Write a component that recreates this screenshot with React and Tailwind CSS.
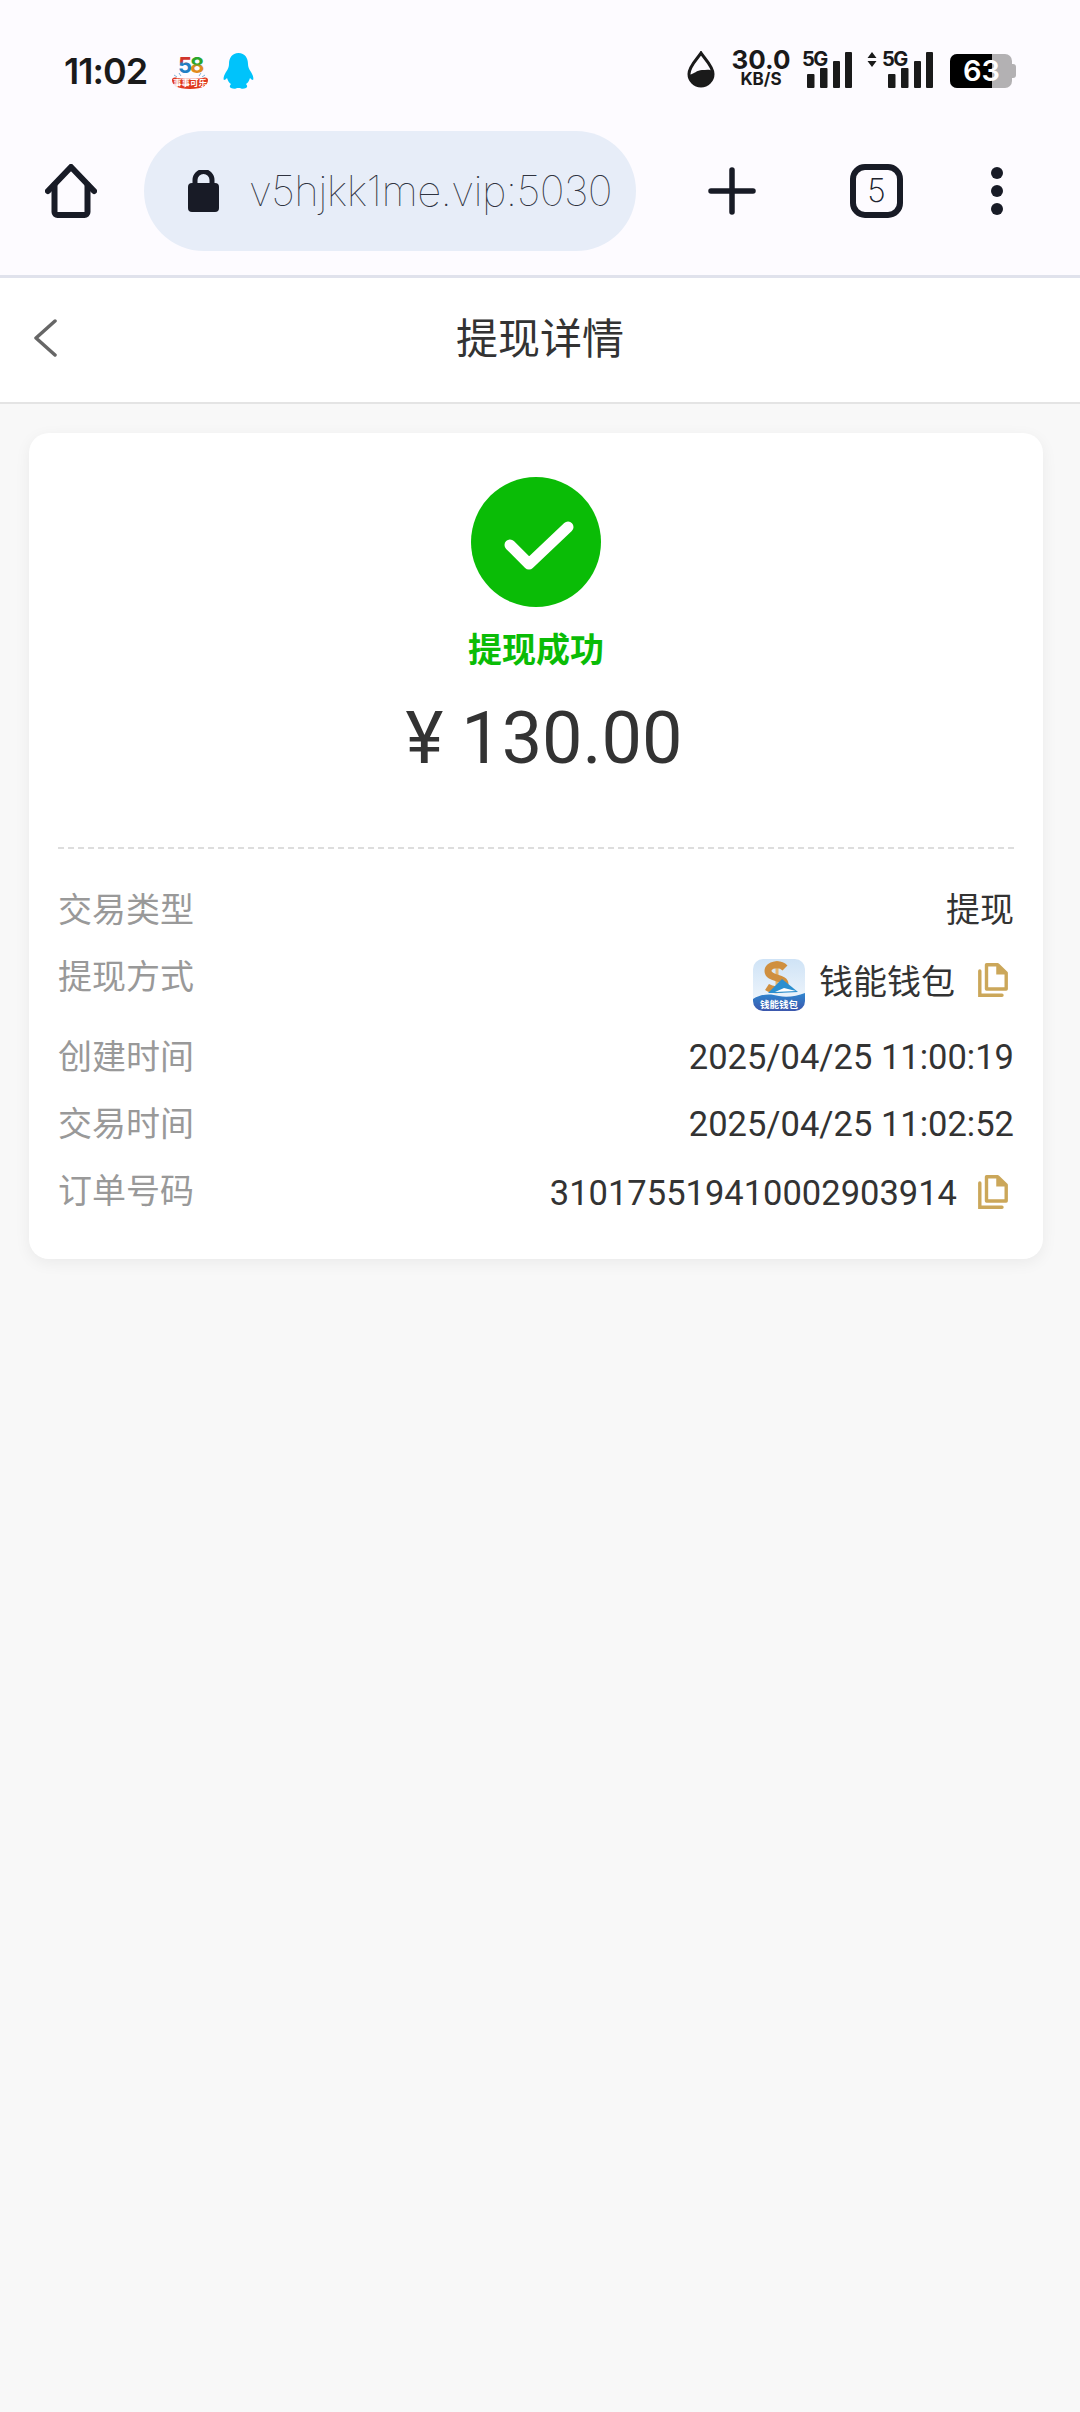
import React from 'react';

const dark = '#181b26';

const SignalBars = () => (
    <svg width="45" height="36" viewBox="0 0 45 36" fill="#1a1a1a">
        <rect x="0" y="22" width="7.500" height="14" rx="1" />
        <rect x="13" y="16" width="7.500" height="20" rx="1" />
        <rect x="26" y="9" width="7" height="27" rx="1" />
        <rect x="38" y="0" width="7" height="36" rx="1" />
    </svg>
);

const CopyIcon = () => (
    <svg width="30" height="34" viewBox="0 0 30 34" fill="none" stroke="#cba75a" strokeWidth="3.400">
        <path d="M8.500 1.800h11.200l8.500 8.200v16H8.500z" strokeLinejoin="round" />
        <path d="M19 1.800v9h9" fill="#cba75a" stroke="#cba75a" strokeWidth="1.500" />
        <path d="M1.800 8v24.200H24" strokeLinecap="round" />
    </svg>
);

const FiftyEightLogo = () => (
    <svg className="ml-[24px] mt-[4px]" width="38" height="40" viewBox="0 -4 38 40">
        <defs>
            <linearGradient id="five" x1="0" y1="0" x2="0" y2="1">
                <stop offset="0.35" stopColor="#d0342c" />
                <stop offset="0.45" stopColor="#1f7fc4" />
            </linearGradient>
            <linearGradient id="eight" x1="0" y1="0" x2="0" y2="1">
                <stop offset="0.45" stopColor="#2aa52a" />
                <stop offset="0.55" stopColor="#e08a1e" />
            </linearGradient>
        </defs>
        <text x="7" y="16" fontSize="22" fontWeight="700" fill="url(#five)" fontFamily="Inter, sans-serif">5</text>
        <text x="19" y="16" fontSize="22" fontWeight="700" fill="url(#eight)" fontFamily="Inter, sans-serif">8</text>
        <path d="M3 18l3 2M34 18l-3 2M8 16l2 3M30 16l-2 3" stroke="#7fb2d8" strokeWidth="1" />
        <path d="M1 23c0-2 2-3 5-2 4 1 22 1 26 0 3-1 5 0 5 2 0 5-5 9-18 9S1 28 1 23z" fill="#e0391f" />
        <text x="19" y="29" textAnchor="middle" fontSize="8.500" fontWeight="700" fill="#ffffff" fontFamily="'Noto Sans CJK SC', sans-serif">事事可乐</text>
    </svg>
);

const WalletLogo = () => (
    <svg width="52" height="52" viewBox="0 0 52 52">
        <defs>
            <linearGradient id="sky" x1="0" y1="0" x2="0" y2="1">
                <stop offset="0" stopColor="#cfe3f6" />
                <stop offset="1" stopColor="#f5f9fd" />
            </linearGradient>
            <linearGradient id="band" x1="0" y1="0" x2="0" y2="1">
                <stop offset="0" stopColor="#2f86cf" />
                <stop offset="1" stopColor="#3c57ad" />
            </linearGradient>
        </defs>
        <rect width="52" height="52" rx="10" fill="url(#sky)" />
        <path d="M24 2v30" stroke="#e6b56c" strokeWidth="3" />
        <path d="M32 9C27 4 15 5 15 12c0 8 17 6 17 13 0 7-12 7-18 3" fill="none" stroke="#cf8f3f" strokeWidth="7" />
        <path d="M15 34l14-14 16 13-20 1z" fill="#2b8fd0" />
        <path d="M22 33l21-1-12-3z" fill="#ffffff" />
        <path d="M0 40c10-6 18-5 26-3s18 0 26-3v8a10 10 0 0 1-10 10H10A10 10 0 0 1 0 42z" fill="url(#band)" />
        <text x="26" y="49" textAnchor="middle" fontSize="9.500" fontWeight="700" fill="#ffffff" fontFamily="'Noto Sans CJK SC', sans-serif">钱能钱包</text>
    </svg>
);

const Row = ({ label, children, className = '' }) => (
    <div className={`flex justify-between ${className}`}>
        <span className="text-[#999999] text-[34px] leading-[46px]">{label}</span>
        {children}
    </div>
);

const App = () => {
    return (
        <div className="w-[1080px] h-[2412px] bg-[#f8f8f8] font-['Roboto','Noto_Sans_CJK_SC',sans-serif] text-[#333333]">

            {/* browser chrome */}
            <div className="bg-[#fdfbff] border-b-[3px] border-[#e0e2ec] pb-[24px]">
                <div className="h-[131px] pt-[49px] pl-[64px] pr-[64px] flex justify-between items-start font-['Inter',sans-serif]">
                    <div className="flex items-start">
                        <span className="text-[36px] leading-[44px] font-semibold text-[#1a1a1a] tracking-[-1px]">11:02</span>
                        <FiftyEightLogo />
                        <svg className="ml-[14px] mt-[4px]" width="31" height="36" viewBox="0 0 31 36" fill="#00c3fb">
                            <path d="M15.500 0C22 0 25 5 25 11c0 3 1 5 3 8 2 3 3 7 2 8-1 0-2-1-3-2-1 3-2 5-4 6 1 1 2 3 0 4-2 1-5 1-6 0h-3c-1 1-4 1-6 0-2-1-1-3 0-4-2-1-3-3-4-6-1 1-2 2-3 2-1-1 0-5 2-8 2-3 3-5 3-8C6 5 9 0 15.500 0z" />
                        </svg>
                    </div>
                    <div className="flex items-start">
                        <svg className="mt-[2px]" width="28" height="37" viewBox="0 0 28 37">
                            <path d="M14 2c3 5 12 13 12 21a12 12 0 0 1-24 0C2 15 11 7 14 2z" fill="none" stroke="#1a1a1a" strokeWidth="3" />
                            <path d="M2 24c5-1 8-5 13-5 4 0 7-1 11 1 1 9-5 15-12 15S1 30 2 24z" fill="#1a1a1a" />
                        </svg>
                        <div className="ml-[18px] w-[56px] flex flex-col items-center text-[#1a1a1a] font-bold">
                            <span className="text-[26px] leading-[22px]">30.0</span>
                            <span className="text-[17px] leading-[15px] mt-[1px]">KB/S</span>
                        </div>
                        <div className="ml-[13px] relative w-[50px] h-[36px] mt-[3px]">
                            <span className="absolute left-0 top-[-3px] text-[20px] leading-[20px] font-bold text-[#1a1a1a] tracking-[-1.500px]">5G</span>
                            <div className="absolute right-0 top-0"><SignalBars /></div>
                        </div>
                        <div className="ml-[15px] mt-[3px] relative w-[66px] h-[36px]">
                            <svg className="absolute left-0 top-0" width="10" height="15" viewBox="0 0 10 15" fill="#1a1a1a">
                                <path d="M5 0l4.500 6h-9zM5 15l4.500-6h-9z" />
                            </svg>
                            <span className="absolute left-[15px] top-[-3px] text-[20px] leading-[20px] font-bold text-[#1a1a1a] tracking-[-1.500px]">5G</span>
                            <div className="absolute right-0 top-0"><SignalBars /></div>
                        </div>
                        <div className="ml-[17px] mt-[5px] flex items-center">
                            <div className="relative w-[62px] h-[34px] rounded-[7px] overflow-hidden bg-[#b3b1b3]">
                                <div className="absolute left-0 top-0 h-full w-[42px] bg-black"></div>
                                <span className="absolute left-[13px] top-0 text-[29px] leading-[34px] font-semibold text-white">63</span>
                            </div>
                            <div className="w-[4px] h-[14px] rounded-r-[3px] bg-[#b3b1b3]"></div>
                        </div>
                    </div>
                </div>

                <div className="h-[120px] flex items-center pl-[45px]">
                    <svg width="52" height="54" viewBox="0 0 52 54" fill="none" stroke={dark} strokeWidth="6" strokeLinecap="round" strokeLinejoin="round">
                        <path d="M3 27L26 3l23 24" />
                        <path d="M9.500 21v27a3 3 0 0 0 3 3h27a3 3 0 0 0 3-3V21" />
                    </svg>
                    <div className="ml-[47px] w-[492px] h-[120px] rounded-full bg-[#e7edf8] flex items-center pl-[44px]">
                        <svg width="31" height="42" viewBox="0 0 31 42">
                            <path d="M7 16V10a8.500 8.500 0 0 1 17 0v6" fill="none" stroke={dark} strokeWidth="5" />
                            <rect x="0" y="13" width="31" height="29" rx="4" fill={dark} />
                        </svg>
                        <span className="ml-[30px] font-['Inter',sans-serif] font-thin text-[#2f3340] text-[42px] leading-[50px] tracking-[-0.600px] whitespace-nowrap">v5hjkk1me.vip:5030</span>
                    </div>
                    <svg className="ml-[72px]" width="48" height="48" viewBox="0 0 48 48" stroke={dark} strokeWidth="5.500" strokeLinecap="round">
                        <path d="M24 3v42M3 24h42" />
                    </svg>
                    <div className="ml-[94px] w-[53px] h-[54px] box-border rounded-[15px] border-[6px] border-[#181b26] flex items-center justify-center font-['Inter',sans-serif] font-extralight text-[32px] leading-none text-[#20232e]">5</div>
                    <div className="ml-[88px] flex flex-col gap-[6px]">
                        <div className="w-[12px] h-[12px] rounded-full bg-[#181b26]"></div>
                        <div className="w-[12px] h-[12px] rounded-full bg-[#181b26]"></div>
                        <div className="w-[12px] h-[12px] rounded-full bg-[#181b26]"></div>
                    </div>
                </div>
            </div>

            {/* page header */}
            <div className="relative h-[126px] bg-white border-b-2 border-[#e4e4e4] flex items-center justify-center">
                <svg className="absolute left-[33px] top-[41px]" width="24" height="38" viewBox="0 0 24 38" fill="none" stroke="#666666" strokeWidth="3.500" strokeLinecap="round" strokeLinejoin="round">
                    <path d="M22 2L3 19l19 17" />
                </svg>
                <span className="text-[42px] leading-[56px] text-[#333333]">提现详情</span>
            </div>

            {/* detail card */}
            <div className="pl-[29px] pr-[37px] pt-[29px]">
                <div className="bg-white rounded-[20px] shadow-[0_4px_16px_rgba(0,0,0,0.06)] px-[29px] pt-[44px] pb-[43px]">
                    <div className="flex flex-col items-center">
                        <div className="w-[130px] h-[130px] rounded-full bg-[#0abc06]">
                            <svg width="130" height="130" viewBox="0 0 130 130" fill="none" stroke="#ffffff" strokeWidth="11" strokeLinecap="round" strokeLinejoin="round">
                                <path d="M39 68l19 19 39-37" />
                            </svg>
                        </div>
                        <p className="mt-[18px] text-[34px] leading-[50px] font-bold text-[#0abc06]">提现成功</p>
                        <p className="mt-[19px] h-[90px] text-[72px] leading-[90px] text-[#333333] pl-[16px] whitespace-nowrap">¥ 130.00</p>
                    </div>

                    <div className="mt-[63px] border-t-2 border-dashed border-[#dddddd]"></div>

                    <div className="mt-[38px] flex flex-col gap-[21px] text-[34.500px] text-[#333333]">
                        <Row label="交易类型">
                            <span className="text-[34px] leading-[46px]">提现</span>
                        </Row>
                        <Row label="提现方式" className="h-[59px]">
                            <div className="flex items-center mt-[5px] h-[52px] pr-[6px]">
                                <WalletLogo />
                                <span className="ml-[14px] text-[34px] leading-[46px] mt-[-6px]">钱能钱包</span>
                                <div className="ml-[23px] mt-[-10px]"><CopyIcon /></div>
                            </div>
                        </Row>
                        <Row label="创建时间">
                            <span className="leading-[46px]">2025/04/25 11:00:19</span>
                        </Row>
                        <Row label="交易时间">
                            <span className="leading-[46px]">2025/04/25 11:02:52</span>
                        </Row>
                        <Row label="订单号码">
                            <div className="flex items-center pr-[6px]">
                                <span className="leading-[46px] mt-[2px]">310175519410002903914</span>
                                <div className="ml-[21px]"><CopyIcon /></div>
                            </div>
                        </Row>
                    </div>
                </div>
            </div>
        </div>
    );
};

export default App;
